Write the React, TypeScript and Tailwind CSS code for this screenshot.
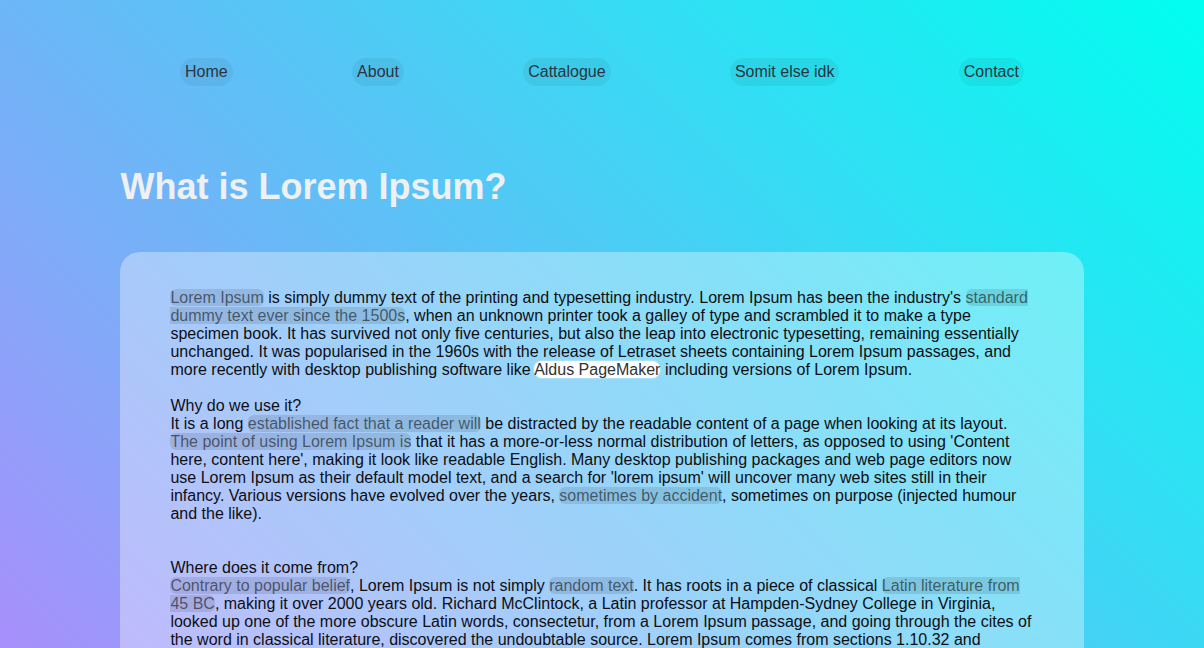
import React from "react";

const Hl = ({ children }: { children: React.ReactNode }) => (
  <span className="bg-black/10 text-black/55 rounded-[6px]">{children}</span>
);

export default function App() {
  const nav = ["Home", "About", "Cattalogue", "Somit else idk", "Contact"];
  return (
    <div
      className="min-h-screen w-full bg-[linear-gradient(45deg,#a88ffb,#00fff0)] bg-fixed pb-[60px]"
      style={{ fontFamily: '"Liberation Sans", Arial, sans-serif' }}
    >
      <div className="w-4/5 mx-auto">
        <nav className="flex justify-around pt-[58px]">
          {nav.map((n) => (
            <a
              key={n}
              className="rounded-full bg-black/5 p-[5px] text-[16px] leading-[18px] text-[#2b3440]"
            >
              {n}
            </a>
          ))}
        </nav>
        <h1 className="mt-[80px] text-[36px] leading-[41px] font-bold text-[#eef0f2]">
          What is Lorem Ipsum?
        </h1>
        <div className="mt-[45px] rounded-[20px] bg-white/35 px-[50px] pt-[37px] pb-[50px] text-[16px] leading-[18px] text-[#0d0f14]">
          <p>
            <Hl>Lorem Ipsum</Hl> is simply dummy text of the printing and typesetting industry. Lorem Ipsum has been
            the industry's <Hl>standard dummy text ever since the 1500s</Hl>, when an unknown printer took a galley of
            type and scrambled it to make a type specimen book. It has survived not only five centuries, but also the
            leap into electronic typesetting, remaining essentially unchanged. It was popularised in the 1960s with the
            release of Letraset sheets containing Lorem Ipsum passages, and more recently with desktop publishing
            software like{" "}
            <span className="bg-white text-[#333] rounded-[8px] shadow-[0_0_2px_rgba(255,255,255,0.8)]">
              Aldus PageMaker
            </span>{" "}
            including versions of Lorem Ipsum.
            <br />
            <br />
            Why do we use it?
            <br />
            It is a long <Hl>established fact that a reader will</Hl> be distracted by the readable content of a page
            when looking at its layout. <Hl>The point of using Lorem Ipsum is</Hl> that it has a more-or-less normal
            distribution of letters, as opposed to using 'Content here, content here', making it look like readable
            English. Many desktop publishing packages and web page editors now use Lorem Ipsum as their default model
            text, and a search for 'lorem ipsum' will uncover many web sites still in their infancy. Various versions
            have evolved over the years, <Hl>sometimes by accident</Hl>, sometimes on purpose (injected humour and the
            like).
            <br />
            <br />
            <br />
            Where does it come from?
            <br />
            <Hl>Contrary to popular belief</Hl>, Lorem Ipsum is not simply <Hl>random text</Hl>. It has roots in a
            piece of classical <Hl>Latin literature from 45 BC</Hl>, making it over 2000 years old. Richard McClintock,
            a Latin professor at Hampden-Sydney College in Virginia, looked up one of the more obscure Latin words,
            consectetur, from a Lorem Ipsum passage, and going through the cites of the word in classical literature,
            discovered the undoubtable source. Lorem Ipsum comes from sections 1.10.32 and 1.10.33 of "de Finibus
            Bonorum et Malorum" (The Extremes of Good and Evil) by Cicero, written in 45 BC. This book is a treatise on
            the theory of ethics, very popular during the Renaissance. The first line of Lorem Ipsum, "Lorem ipsum dolor
            sit amet..", comes from a line in section 1.10.32.
          </p>
        </div>
      </div>
    </div>
  );
}
